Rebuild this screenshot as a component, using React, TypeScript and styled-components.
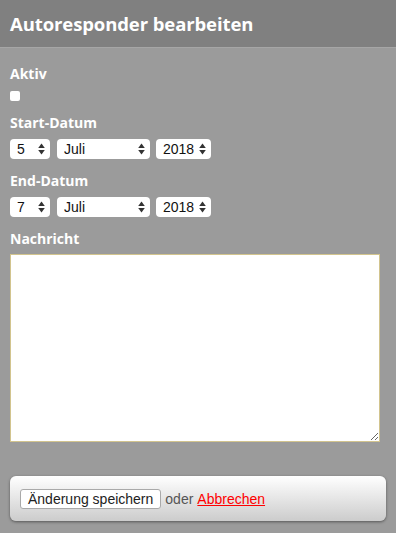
import React from 'react';
import styled, { createGlobalStyle } from 'styled-components';

const GlobalStyle = createGlobalStyle`
  html, body {
    margin: 0;
    padding: 0;
    background: #9b9b9b;
  }
  body {
    font-family: 'Liberation Sans', Arial, sans-serif;
  }
`;

const Page = styled.div`
  width: 396px;
  min-height: 533px;
  background: #9b9b9b;
`;

const Header = styled.div`
  height: 47px;
  display: flex;
  align-items: center;
  padding: 0 10px;
  background: #808080;
  border-bottom: 1px solid #a6a6a6;
`;

const Title = styled.h1`
  margin: 0;
  font-family: 'Open Sans', 'DejaVu Sans', sans-serif;
  font-size: 18.5px;
  font-weight: 700;
  color: #ffffff;
  letter-spacing: -0.1px;
`;

const Content = styled.form`
  padding: 17px 10px 0;
  display: flex;
  flex-direction: column;
`;

const Field = styled.div`
  display: flex;
  flex-direction: column;
  align-items: flex-start;
  margin-bottom: 13px;
`;

const Label = styled.label`
  font-family: 'Open Sans', 'DejaVu Sans', sans-serif;
  font-size: 14px;
  font-weight: 700;
  line-height: 18px;
  color: #ffffff;
  margin-bottom: 7px;
`;

const Checkbox = styled.input`
  appearance: none;
  margin: 1px 0 0;
  width: 10px;
  height: 10px;
  border-radius: 2px;
  background: #ffffff;
`;

const SelectRow = styled.div`
  display: flex;
  gap: 6px;
`;

const SelectWrap = styled.div<{ $width: number }>`
  position: relative;
  width: ${(p) => p.$width}px;
  height: 20px;
  &:first-child {
    margin-right: 1px;
  }
`;

const Select = styled.select`
  appearance: none;
  width: 100%;
  height: 100%;
  border: none;
  border-radius: 4px;
  background: #ffffff;
  padding: 0 14px 0 7px;
  font-family: 'Liberation Sans', Arial, sans-serif;
  font-size: 14px;
  color: #111;
  outline: none;
`;

const Arrows = styled.svg`
  position: absolute;
  right: 5px;
  top: 4px;
  width: 7px;
  height: 12px;
  pointer-events: none;
`;

const Message = styled.textarea`
  box-sizing: border-box;
  width: 370px;
  height: 188px;
  margin-top: -1px;
  border: 1px solid #d2c48e;
  background: #ffffff;
  outline: none;
`;

const Footer = styled.div`
  margin: 21px 10px 0;
  height: 45px;
  box-sizing: border-box;
  padding: 0 10px;
  display: flex;
  align-items: center;
  gap: 4px;
  border-radius: 6px;
  background: linear-gradient(180deg, #ffffff 0%, #cccccc 100%);
  box-shadow: 0 1px 3px rgba(0, 0, 0, 0.45);
  font-family: 'Liberation Sans', Arial, sans-serif;
  font-size: 14px;
`;

const SaveButton = styled.button`
  height: 20px;
  padding: 0 7px;
  background: #ffffff;
  border: 1px solid #a9a9a9;
  border-radius: 3px;
  font-family: 'Liberation Sans', Arial, sans-serif;
  font-size: 14px;
  color: #222;
`;

const Muted = styled.span`
  color: #555555;
`;

const CancelLink = styled.a`
  color: #ff0000;
  text-decoration: underline;
`;

const SelectBox: React.FC<{ width: number; value: string; options: string[] }> = ({
  width,
  value,
  options,
}) => (
  <SelectWrap $width={width}>
    <Select defaultValue={value}>
      {options.map((o) => (
        <option key={o}>{o}</option>
      ))}
    </Select>
    <Arrows viewBox="0 0 7 12">
      <path d="M3.5 0.5 L6.8 5 H0.2 Z" fill="#333" />
      <path d="M3.5 11.5 L6.8 7 H0.2 Z" fill="#333" />
    </Arrows>
  </SelectWrap>
);

const days = Array.from({ length: 31 }, (_, i) => String(i + 1));
const months = [
  'Januar', 'Februar', 'März', 'April', 'Mai', 'Juni',
  'Juli', 'August', 'September', 'Oktober', 'November', 'Dezember',
];
const years = ['2017', '2018', '2019', '2020'];

const DateRow: React.FC<{ day: string }> = ({ day }) => (
  <SelectRow>
    <SelectBox width={40} value={day} options={days} />
    <SelectBox width={93} value="Juli" options={months} />
    <SelectBox width={55} value="2018" options={years} />
  </SelectRow>
);

const App: React.FC = () => (
  <Page>
    <GlobalStyle />
    <Header>
      <Title>Autoresponder bearbeiten</Title>
    </Header>
    <Content onSubmit={(e) => e.preventDefault()}>
      <Field>
        <Label>Aktiv</Label>
        <Checkbox type="checkbox" />
      </Field>
      <Field>
        <Label>Start-Datum</Label>
        <DateRow day="5" />
      </Field>
      <Field>
        <Label>End-Datum</Label>
        <DateRow day="7" />
      </Field>
      <Field>
        <Label>Nachricht</Label>
        <Message />
      </Field>
    </Content>
    <Footer>
      <SaveButton type="button">Änderung speichern</SaveButton>
      <Muted>oder</Muted>
      <CancelLink href="#">Abbrechen</CancelLink>
    </Footer>
  </Page>
);

export default App;
